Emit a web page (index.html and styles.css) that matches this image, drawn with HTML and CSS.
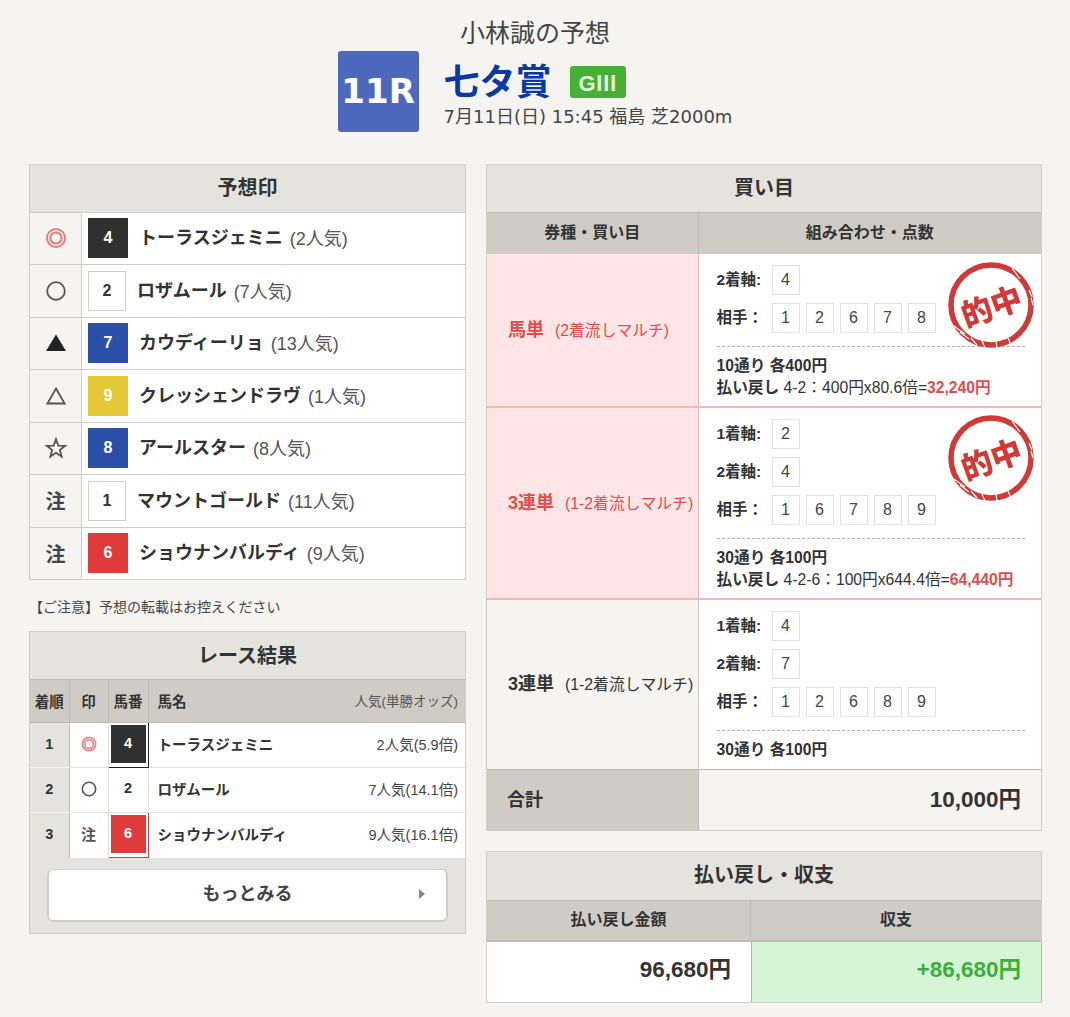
FILE: index.html
```html
<!DOCTYPE html>
<html lang="ja">
<head>
    <meta charset="UTF-8">
    <title>小林誠の予想</title>
    <link rel="stylesheet" href="styles.css">
</head>
<body>
    <h1 class="page-title">小林誠の予想</h1>

    <div class="race-head">
        <div class="race-no">11R</div>
        <div class="race-info">
            <div class="race-name"><span class="race-name-text">七タ賞</span><span class="grade">G<span class="grade-no">Ⅲ</span></span></div>
            <p class="race-meta">7月11日(日) 15:45 福島 芝2000m</p>
        </div>
    </div>

    <div class="columns">
        <div class="col-left">
            <section class="card">
                <h2 class="card-title">予想印</h2>
                <div class="pick"><div class="mark"><svg class="mark-icon" viewBox="0 0 20 20"><circle cx="10" cy="10" r="9" class="red-line"/><circle cx="10" cy="10" r="5.6" class="red-line"/></svg></div><div class="pick-body"><span class="num num-black">4</span><b>トーラスジェミニ</b><span class="pop">(2人気)</span></div></div>
                <div class="pick"><div class="mark"><svg class="mark-icon" viewBox="0 0 20 20"><circle cx="10" cy="10" r="8.8" class="dark-line"/></svg></div><div class="pick-body"><span class="num num-white">2</span><b>ロザムール</b><span class="pop">(7人気)</span></div></div>
                <div class="pick"><div class="mark"><svg class="mark-icon" viewBox="0 0 20 20"><polygon points="10,1.5 20,18 0,18" fill="#222"/></svg></div><div class="pick-body"><span class="num num-blue">7</span><b>カウディーリョ</b><span class="pop">(13人気)</span></div></div>
                <div class="pick"><div class="mark"><svg class="mark-icon" viewBox="0 0 20 20"><polygon points="10,2.5 18.6,17.5 1.4,17.5" class="dark-line"/></svg></div><div class="pick-body"><span class="num num-yellow">9</span><b>クレッシェンドラヴ</b><span class="pop">(1人気)</span></div></div>
                <div class="pick"><div class="mark"><svg class="mark-icon" viewBox="0 0 20 20"><polygon points="10,1.2 12.3,7.6 19.2,7.8 13.8,12 15.7,18.6 10,14.8 4.3,18.6 6.2,12 .8,7.8 7.7,7.6" class="dark-line"/></svg></div><div class="pick-body"><span class="num num-blue">8</span><b>アールスター</b><span class="pop">(8人気)</span></div></div>
                <div class="pick"><div class="mark mark-text">注</div><div class="pick-body"><span class="num num-white">1</span><b>マウントゴールド</b><span class="pop">(11人気)</span></div></div>
                <div class="pick"><div class="mark mark-text">注</div><div class="pick-body"><span class="num num-red">6</span><b>ショウナンバルディ</b><span class="pop">(9人気)</span></div></div>
            </section>

            <p class="notice">【ご注意】予想の転載はお控えください</p>

            <section class="card result-card">
                <h2 class="card-title">レース結果</h2>
                <table class="result">
                    <colgroup><col class="c-rank"><col class="c-mark"><col class="c-num"><col></colgroup>
                    <tr>
                        <th>着順</th>
                        <th>印</th>
                        <th>馬番</th>
                        <th class="th-name">馬名<span>人気(単勝オッズ)</span></th>
                    </tr>
                    <tr>
                        <td class="rank">1</td>
                        <td><svg class="mini-mark" viewBox="0 0 16 16"><circle cx="8" cy="8" r="5.5" fill="none" stroke="#e98585" stroke-width="4"/><circle cx="8" cy="8" r="5.5" fill="none" stroke="#fff" stroke-width=".6"/></svg></td>
                        <td class="waku waku-black"><span>4</span></td>
                        <td class="horse"><b>トーラスジェミニ</b><span>2人気(5.9倍)</span></td>
                    </tr>
                    <tr>
                        <td class="rank">2</td>
                        <td><svg class="mini-mark" viewBox="0 0 16 16"><circle cx="8" cy="8" r="6.7" fill="none" stroke="#555" stroke-width="1.6"/></svg></td>
                        <td class="waku"><span>2</span></td>
                        <td class="horse"><b>ロザムール</b><span>7人気(14.1倍)</span></td>
                    </tr>
                    <tr>
                        <td class="rank">3</td>
                        <td class="mini-text">注</td>
                        <td class="waku waku-red"><span>6</span></td>
                        <td class="horse"><b>ショウナンバルディ</b><span>9人気(16.1倍)</span></td>
                    </tr>
                </table>
                <div class="more-wrap">
                    <a class="more">もっとみる<i></i></a>
                </div>
            </section>
        </div>

        <div class="col-right">
            <section class="card">
                <h2 class="card-title">買い目</h2>
                <table class="buy">
                    <colgroup><col class="c-type"><col></colgroup>
                    <tr class="buy-head">
                        <th>券種・買い目</th>
                        <th>組み合わせ・点数</th>
                    </tr>
                    <tr class="hit hit-a">
                        <td class="type"><b>馬単</b><span>(2着流しマルチ)</span></td>
                        <td class="combo">
                            <div class="axis"><b>2着軸:</b><span>4</span></div>
                            <div class="axis"><b>相手：</b><span>1</span><span>2</span><span>6</span><span>7</span><span>8</span></div>
                            <div class="summary">
                                <b>10通り 各400円</b>
                                <p><b>払い戻し</b> 4-2：400円x80.6倍=<em>32,240円</em></p>
                            </div>
                            <svg class="stamp" viewBox="0 0 90 90"><circle cx="45" cy="45" r="40" class="stamp-ring"/><path d="M66 8l8 11M71 6l8 11M83 30l3 7M85 38l2 7M8 66l11 8M14 72l9 7M25 78l6 7M36 81l3 7M50 81l1 7M62 78l3 7" class="stamp-scratch"/><text x="45" y="58" transform="rotate(-20 45 45)" class="stamp-text">的中</text></svg>
                        </td>
                    </tr>
                    <tr class="hit hit-b">
                        <td class="type"><b>3連単</b><span>(1-2着流しマルチ)</span></td>
                        <td class="combo">
                            <div class="axis"><b>1着軸:</b><span>2</span></div>
                            <div class="axis"><b>2着軸:</b><span>4</span></div>
                            <div class="axis"><b>相手：</b><span>1</span><span>6</span><span>7</span><span>8</span><span>9</span></div>
                            <div class="summary">
                                <b>30通り 各100円</b>
                                <p><b>払い戻し</b> 4-2-6：100円x644.4倍=<em>64,440円</em></p>
                            </div>
                            <svg class="stamp" viewBox="0 0 90 90"><circle cx="45" cy="45" r="40" class="stamp-ring"/><path d="M66 8l8 11M71 6l8 11M83 30l3 7M85 38l2 7M8 66l11 8M14 72l9 7M25 78l6 7M36 81l3 7M50 81l1 7M62 78l3 7" class="stamp-scratch"/><text x="45" y="58" transform="rotate(-20 45 45)" class="stamp-text">的中</text></svg>
                        </td>
                    </tr>
                    <tr class="miss">
                        <td class="type"><b>3連単</b><span>(1-2着流しマルチ)</span></td>
                        <td class="combo">
                            <div class="axis"><b>1着軸:</b><span>4</span></div>
                            <div class="axis"><b>2着軸:</b><span>7</span></div>
                            <div class="axis"><b>相手：</b><span>1</span><span>2</span><span>6</span><span>8</span><span>9</span></div>
                            <div class="summary"><b>30通り 各100円</b></div>
                        </td>
                    </tr>
                    <tr class="total">
                        <th>合計</th>
                        <td>10,000円</td>
                    </tr>
                </table>
            </section>

            <section class="card pay-card">
                <h2 class="card-title">払い戻し・収支</h2>
                <div class="pay">
                    <div class="pay-th">払い戻し金額</div>
                    <div class="pay-th">収支</div>
                    <div class="pay-td">96,680円</div>
                    <div class="pay-td plus">+86,680円</div>
                </div>
            </section>
        </div>
    </div>
</body>
</html>
```

FILE: styles.css
```css
* {
    margin: 0;
    padding: 0;
    box-sizing: border-box;
}

body {
    font-family: "Liberation Sans", "Noto Sans CJK JP", sans-serif;
    background: #f5f4f1;
    color: #333;
    height: 1017px;
    overflow: hidden;
}

b {
    font-weight: bold;
}

.page-title {
    font-size: 25px;
    font-weight: normal;
    line-height: 30px;
    text-align: center;
    padding-top: 18px;
    height: 51px;
    color: #444;
}

/* レース見出し */
.race-head {
    display: flex;
    justify-content: center;
    gap: 25px;
    height: 113px;
}

.race-no {
    width: 81px;
    height: 81px;
    background: #4d69bd;
    border-radius: 3px;
    color: #fff;
    font-family: "DejaVu Sans", sans-serif;
    font-size: 34px;
    font-weight: bold;
    line-height: 81px;
    text-align: center;
}

.race-name {
    display: flex;
    align-items: center;
    gap: 18px;
    height: 47px;
    margin-top: 7px;
    font-size: 36px;
    font-weight: bold;
    color: #0a3aa0;
}

.race-name-text {
    margin-bottom: 5px;
}

.grade {
    width: 56px;
    height: 32px;
    background: #45b035;
    border-radius: 3px;
    color: #e6f5e0;
    font-size: 22px;
    line-height: 32px;
    text-align: center;
}

.grade-no {
    font-family: "Noto Sans CJK JP", sans-serif;
    font-size: 21px;
}

.race-meta {
    font-family: "DejaVu Sans", "Noto Sans CJK JP", sans-serif;
    font-size: 18px;
    line-height: 24px;
    color: #444;
}

/* 2カラム */
.columns {
    display: flex;
    gap: 20px;
    padding-left: 29px;
}

.col-left {
    width: 437px;
}

.col-right {
    width: 556px;
}

.card {
    border: 1px solid #cfcdc8;
    border-top-color: #d5d3ce;
    background: #fff;
}

.card-title {
    height: 47px;
    background: #e4e3de;
    font-size: 20px;
    line-height: 46px;
    text-align: center;
    color: #333;
}

/* 予想印 */
.card-title + .pick {
    margin-top: -.5px;
}

.pick {
    display: flex;
    height: 52.5px;
    border-top: 1px solid #cfcdc8;
}

.mark {
    width: 52px;
    background: #f5f4f1;
    border-right: 1px solid #cfcdc8;
    display: flex;
    align-items: center;
    justify-content: center;
    flex-shrink: 0;
}

.mark-icon {
    width: 20px;
    height: 20px;
    overflow: visible;
}

.red-line {
    fill: none;
    stroke: #e77b7b;
    stroke-width: 2;
}

.dark-line {
    fill: none;
    stroke: #555;
    stroke-width: 1.8;
}

.mark-text {
    font-size: 20px;
    font-weight: bold;
    color: #444;
}

.pick-body {
    display: flex;
    align-items: center;
    padding-left: 6px;
    font-size: 18px;
}

.pick-body b {
    margin-bottom: 4px;
}

.pick-body .pop {
    font-size: 18px;
    color: #555;
    margin: 0 0 2px 7px;
}

.num {
    width: 40px;
    height: 40px;
    margin-right: 11px;
    color: #fff;
    font-size: 16px;
    font-weight: bold;
    line-height: 40px;
    text-align: center;
}

.num-black { background: #303030; }
.num-blue { background: #2a50a8; }
.num-yellow { background: #e4c835; }
.num-red { background: #df3b3b; }

.num-white {
    width: 38px;
    border: 1px solid #cfcdc8;
    color: #333;
    line-height: 38px;
}

.notice {
    font-size: 14px;
    line-height: 18px;
    padding: 18px 0 15px;
    color: #444;
}

/* レース結果 */
.result-card {
    background: #e4e3de;
}

.result-card .card-title {
    line-height: 48px;
}

.result {
    width: 100%;
    border-collapse: collapse;
    table-layout: fixed;
}

.c-rank { width: 39px; }
.c-mark { width: 39px; }
.c-num { width: 40px; }

.result th {
    height: 43px;
    background: #cfccc6;
    border: 1px solid #bdbbb5;
    border-width: 1px 1px 1px 0;
    padding-bottom: 2px;
    font-size: 14.5px;
    color: #333;
}

.result th:last-child {
    border-right: 0;
}

.result .th-name {
    text-align: left;
    padding: 0 7px 2px 9px;
}

.th-name span {
    float: right;
    font-size: 13.5px;
    font-weight: normal;
    color: #555;
}

.result td {
    height: 45px;
    padding-bottom: 3px;
    background: #fff;
    border-bottom: 1px solid #e0dfda;
    border-right: 1px solid #e0dfda;
    text-align: center;
    font-size: 14.5px;
}

.result tr:last-child td {
    border-bottom: 0;
}

.result .rank {
    background: #e4e3de;
    border-right: 1px solid #bdbbb5;
    border-bottom-color: #f5f4f1;
    font-weight: bold;
}

.mini-mark {
    display: block;
    width: 16px;
    height: 16px;
    margin: 0 auto;
}

.result .mini-text {
    color: #555;
    font-size: 15px;
    font-weight: bold;
}

.result .waku {
    font-weight: bold;
    padding: 1px 2px 4px;
}

.waku span {
    display: block;
    height: 38px;
    line-height: 36px;
}

.result .waku-black {
    border: 1px solid #222;
    border-top: 0;
    border-left-color: #fff;
}

.waku-black span {
    background: #303030;
    color: #fff;
}

.result .waku-red,
.result tr:last-child .waku-red {
    border: 1px solid #df3b3b;
    border-top: 0;
    border-left-color: #fff;
}

.waku-red span {
    background: #df3b3b;
    color: #fff;
}

.result .horse {
    border-right: 0;
    text-align: right;
    padding: 0 7px 3px 9px;
    color: #444;
}

.horse b {
    float: left;
    color: #333;
}

.more-wrap {
    height: 75px;
    padding: 11px 17px 0;
}

.more {
    display: block;
    position: relative;
    height: 53px;
    background: #fff;
    border: 2px solid #cfcdc8;
    border-width: 1px 2px 2px;
    border-radius: 6px;
    font-size: 18px;
    font-weight: bold;
    line-height: 49px;
    text-align: center;
    color: #444;
}

.more i {
    position: absolute;
    right: 21px;
    top: 19px;
    border-left: 6px solid #888;
    border-top: 5px solid transparent;
    border-bottom: 5px solid transparent;
}

/* 買い目 */
.buy {
    width: 100%;
    border-collapse: collapse;
    table-layout: fixed;
}

.c-type { width: 211px; }

.buy-head th {
    height: 41px;
    padding-bottom: 4px;
    background: #cfccc6;
    border-top: 1px solid #bdbbb5;
    font-size: 16px;
    color: #333;
}

.buy-head th:first-child {
    border-right: 1px solid #bdbbb5;
}

.type {
    padding: 0 0 4px 21px;
    white-space: nowrap;
    font-size: 15.8px;
    background: #f5f4f1;
    border-right: 1px solid #cfcdc8;
}

.type b {
    font-size: 18px;
    margin-right: 11px;
}

.hit .type {
    background: #ffe5e5;
    color: #e54b4b;
    border-right-color: #f4b7b7;
}

.hit td {
    border-bottom: 2px solid #f4b7b7;
}

.hit-a td { height: 153px; }
.hit-b td { height: 192px; }
.miss td { height: 171px; }

.combo {
    position: relative;
    padding: 11px 17px 0 18px;
    vertical-align: top;
    font-size: 15.5px;
}

.axis {
    display: flex;
    align-items: center;
    height: 30px;
    margin-bottom: 8px;
}

.axis b {
    width: 55px;
    white-space: nowrap;
    margin-bottom: 3px;
}

.axis span {
    width: 28px;
    height: 30px;
    margin-right: 6px;
    border: 1px solid #dfdfdf;
    font-size: 16px;
    line-height: 28px;
    text-align: center;
    color: #444;
}

.summary {
    margin-top: 13px;
    border-top: 1px dashed #b0b0b0;
    width: 308px;
    padding-top: 8px;
    line-height: 22px;
    white-space: nowrap;
    font-size: 15.7px;
}

.summary em {
    font-style: normal;
    font-weight: bold;
    color: #e54b4b;
}

.stamp {
    position: absolute;
    top: 6px;
    right: 5px;
    width: 90px;
    height: 90px;
    overflow: visible;
}

.hit-b .stamp {
    top: 5px;
}

.stamp-ring {
    fill: none;
    stroke: #cf3a36;
    stroke-width: 5.5;
}

.stamp-scratch {
    stroke: #fff;
    stroke-width: 1.2;
    fill: none;
}

.stamp-text {
    font-size: 31px;
    font-weight: 900;
    fill: #cf3a36;
    text-anchor: middle;
}

.total th {
    height: 60px;
    padding: 0 0 4px 20px;
    background: #cfccc6;
    border-top: 1px solid #bdbbb5;
    border-right: 1px solid #bdbbb5;
    font-size: 18px;
    text-align: left;
}

.total td {
    padding: 0 20px 6px 0;
    background: #f5f4f1;
    border-top: 1px solid #bdbbb5;
    font-size: 22.5px;
    font-weight: bold;
    text-align: right;
}

/* 払い戻し・収支 */
.pay-card {
    margin-top: 20px;
}

.pay-card .card-title {
    height: 48px;
    line-height: 47px;
}

.pay {
    display: grid;
    grid-template-columns: 264px 1fr;
}

.pay-th {
    height: 42px;
    background: #cfccc6;
    border-top: 1px solid #bdbbb5;
    border-bottom: 2px solid #bdbbb5;
    font-size: 16px;
    font-weight: bold;
    line-height: 38px;
    text-align: center;
}

.pay-th:first-child {
    border-right: 1px solid #bdbbb5;
}

.pay-td {
    height: 60px;
    font-size: 22.5px;
    font-weight: bold;
    line-height: 56px;
    text-align: right;
    padding-right: 20px;
}

.plus {
    background: #d6f5d6;
    color: #3cae3c;
    border-left: 1px solid #8fd08f;
    box-shadow: 1px 0 0 #8fd08f;
}
```
